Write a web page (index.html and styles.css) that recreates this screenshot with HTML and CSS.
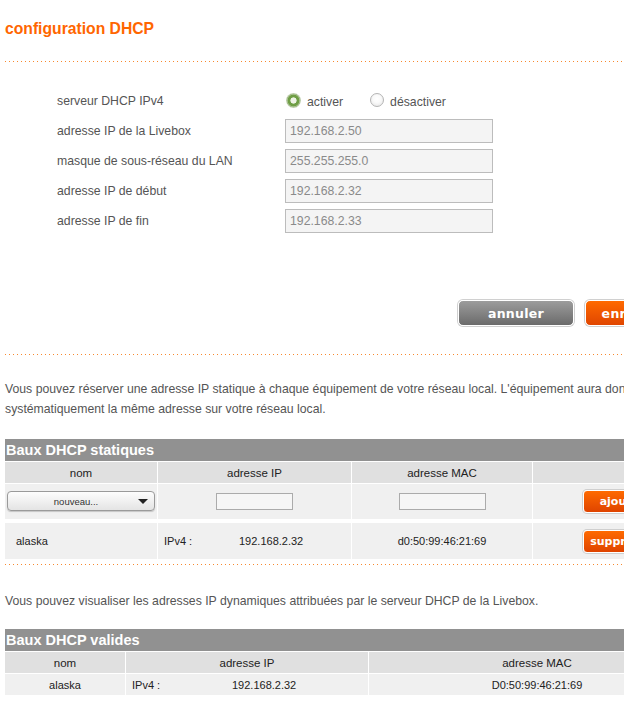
FILE: index.html
```html
<!DOCTYPE html>
<html lang="fr">
<head>
<meta charset="utf-8">
<title>configuration DHCP</title>
<link rel="stylesheet" href="styles.css">
</head>
<body>
<div class="page">
  <h1 class="title">configuration DHCP</h1>
  <div class="dots dots-1"></div>

  <div class="form">
    <div class="frow">
      <span class="flabel">serveur DHCP IPv4</span>
      <div class="radios">
        <span class="radio checked"></span><span class="rlabel">activer</span>
        <span class="radio"></span><span class="rlabel">désactiver</span>
      </div>
    </div>
    <div class="frow">
      <span class="flabel">adresse IP de la Livebox</span>
      <span class="finput">192.168.2.50</span>
    </div>
    <div class="frow">
      <span class="flabel">masque de sous-réseau du LAN</span>
      <span class="finput">255.255.255.0</span>
    </div>
    <div class="frow">
      <span class="flabel">adresse IP de début</span>
      <span class="finput">192.168.2.32</span>
    </div>
    <div class="frow">
      <span class="flabel">adresse IP de fin</span>
      <span class="finput">192.168.2.33</span>
    </div>
  </div>

  <div class="actions">
    <button class="btn btn-gray">annuler</button>
    <button class="btn btn-orange">enregistrer</button>
  </div>

  <div class="dots dots-2"></div>

  <p class="intro intro-1">Vous pouvez réserver une adresse IP statique à chaque équipement de votre réseau local. L'équipement aura donc systématiquement la même adresse sur votre réseau local.</p>

  <div class="table t-static">
    <div class="thead-title">Baux DHCP statiques</div>
    <div class="trow hdr">
      <div class="cell">nom</div>
      <div class="cell">adresse IP</div>
      <div class="cell">adresse MAC</div>
      <div class="cell"></div>
    </div>
    <div class="trow edit">
      <div class="cell c-left-sel">
        <div class="select"><span class="sel-text">nouveau...</span><span class="sel-arrow"></span></div>
      </div>
      <div class="cell"><span class="tinput ip"></span></div>
      <div class="cell"><span class="tinput mac"></span></div>
      <div class="cell c-btn"><button class="sbtn">ajouter</button></div>
    </div>
    <div class="trow data">
      <div class="cell c-name">alaska</div>
      <div class="cell c-ip"><span class="ipv4">IPv4 :</span><span>192.168.2.32</span></div>
      <div class="cell">d0:50:99:46:21:69</div>
      <div class="cell c-btn"><button class="sbtn">supprimer</button></div>
    </div>
  </div>

  <div class="dots dots-3"></div>

  <p class="intro intro-2">Vous pouvez visualiser les adresses IP dynamiques attribuées par le serveur DHCP de la Livebox.</p>

  <div class="table t-valid">
    <div class="thead-title">Baux DHCP valides</div>
    <div class="trow hdr">
      <div class="cell">nom</div>
      <div class="cell">adresse IP</div>
      <div class="cell">adresse MAC</div>
    </div>
    <div class="trow vdata">
      <div class="cell">alaska</div>
      <div class="cell c-ip"><span class="ipv4">IPv4 :</span><span>192.168.2.32</span></div>
      <div class="cell">D0:50:99:46:21:69</div>
    </div>
  </div>
</div>
</body>
</html>
```

FILE: styles.css
```css
html, body {
  margin: 0;
  padding: 0;
  overflow: hidden;
  background: #fff;
}

body {
  font-family: "Liberation Sans", Arial, sans-serif;
  font-size: 12.25px;
  color: #555;
}

.page {
  width: 700px;
  padding-left: 5px;
}

.title {
  margin: 0;
  padding-top: 20px;
  font-size: 15.7px;
  line-height: 18px;
  font-weight: bold;
  color: #f60;
}

.dots {
  height: 1px;
  background-image: linear-gradient(to right, #f7892f 1px, transparent 1px);
  background-size: 4px 1px;
}

.dots-1 { margin-top: 23px; }
.dots-2 { margin-top: 28px; }
.dots-3 { margin-top: 5px; }

/* form */
.form {
  margin-top: 24px;
}

.frow {
  display: flex;
  align-items: center;
  height: 30px;
}

.flabel {
  width: 228px;
  padding-left: 52px;
  color: #555;
}

.radios {
  display: flex;
  align-items: center;
  margin-top: -2px;
}

.radio {
  width: 12px;
  height: 12px;
  border-radius: 50%;
  border: 1px solid #b4b4b4;
  background: radial-gradient(circle at 50% 40%, #fff 0, #fafafa 40%, #e2e2e2 100%);
  margin-left: 1px;
}

.radio.checked {
  width: 15px;
  height: 15px;
  border: none;
  background: radial-gradient(circle, #eef3e6 0 2.8px, #6f9e45 3.4px 5.5px, #a8c08f 6.1px 6.7px, #c9d6bd 7.2px);
}

.rlabel {
  margin-left: 6px;
  margin-top: 4px;
  color: #555;
}

.rlabel + .radio {
  margin-left: 27px;
}

.finput {
  box-sizing: border-box;
  width: 208px;
  height: 24px;
  border: 1px solid #bcbcbc;
  background: #f4f4f4;
  color: #8a8a8a;
  padding-left: 4px;
  line-height: 22px;
}

/* action buttons */
.actions {
  display: flex;
  gap: 11px;
  margin-top: 64px;
  padding-left: 453px;
}

.btn {
  box-sizing: border-box;
  width: 116px;
  height: 26px;
  flex: none;
  border-radius: 5px;
  border: 1px solid #fff;
  box-shadow: 0 0 0 1px #d0d0d0;
  font-family: "DejaVu Sans", sans-serif;
  font-weight: bold;
  font-size: 12.5px;
  letter-spacing: 0.3px;
  color: #fff;
  padding: 0;
  text-align: center;
}

.btn-gray {
  background: linear-gradient(#9c9c9c, #6b6b6b);
}

.btn-orange {
  background: linear-gradient(#ff6a00, #e04600);
}

/* paragraphs */
.intro {
  margin: 0;
  line-height: 20px;
  color: #555;
}

.intro-1 { margin-top: 24px; }
.intro-2 { margin-top: 26px; }

/* tables */
.table {
  color: #222;
  font-size: 11px;
}

.t-static { margin-top: 20px; }
.t-valid { margin-top: 18px; }

.thead-title {
  height: 22px;
  line-height: 22px;
  background: #919191;
  color: #fff;
  font-weight: bold;
  font-size: 14.5px;
  padding-left: 1px;
}

.trow {
  display: grid;
  column-gap: 1px;
  margin-top: 1px;
}

.t-static .trow {
  grid-template-columns: 152px 193px 180px 1fr;
}

.t-valid .trow {
  grid-template-columns: 120px 242px 1fr;
}

.cell {
  display: flex;
  align-items: center;
  justify-content: center;
  background: #f0f0f0;
}

.trow.hdr .cell {
  background: #e0e0e0;
  height: 21px;
  font-size: 11.5px;
}

.trow.edit .cell { height: 35px; }
.trow.data { margin-top: 4px; }
.trow.data .cell { height: 36px; }
.trow.vdata .cell { height: 21px; }

.c-left-sel { justify-content: flex-start; }

.select {
  box-sizing: border-box;
  width: 148px;
  height: 20px;
  margin-left: 2px;
  margin-top: -1px;
  border: 1px solid #9a9a9a;
  border-radius: 4px;
  background: linear-gradient(#fdfdfd, #e4e4e4);
  box-shadow: 0 1px 1px rgba(0, 0, 0, 0.18);
  display: flex;
  align-items: center;
}

.sel-text {
  flex: 1;
  text-align: center;
  font-size: 9.5px;
  color: #333;
  padding-left: 6px;
}

.sel-arrow {
  width: 0;
  height: 0;
  border-left: 5px solid transparent;
  border-right: 5px solid transparent;
  border-top: 5px solid #222;
  margin-right: 6px;
}

.tinput {
  box-sizing: border-box;
  height: 17px;
  border: 1px solid #ababab;
  background: #f6f6f6;
}

.tinput.ip { width: 77px; }
.tinput.mac { width: 87px; }

.c-btn {
  justify-content: flex-start;
  padding-left: 50px;
}

.sbtn {
  box-sizing: border-box;
  width: 78px;
  height: 23px;
  border-radius: 4px;
  border: 1px solid #fff;
  box-shadow: 0 0 0 1px #cfcfcf;
  background: linear-gradient(#ff6a00, #df4400);
  color: #fff;
  font-family: "DejaVu Sans", sans-serif;
  font-weight: bold;
  font-size: 11px;
  padding: 0;
  text-align: center;
}

.c-name {
  justify-content: flex-start;
  padding-left: 11px;
}

.c-ip {
  justify-content: flex-start;
  padding-left: 6px;
}

.t-static .ipv4 { width: 75px; }
.t-valid .ipv4 { width: 100px; }
```
